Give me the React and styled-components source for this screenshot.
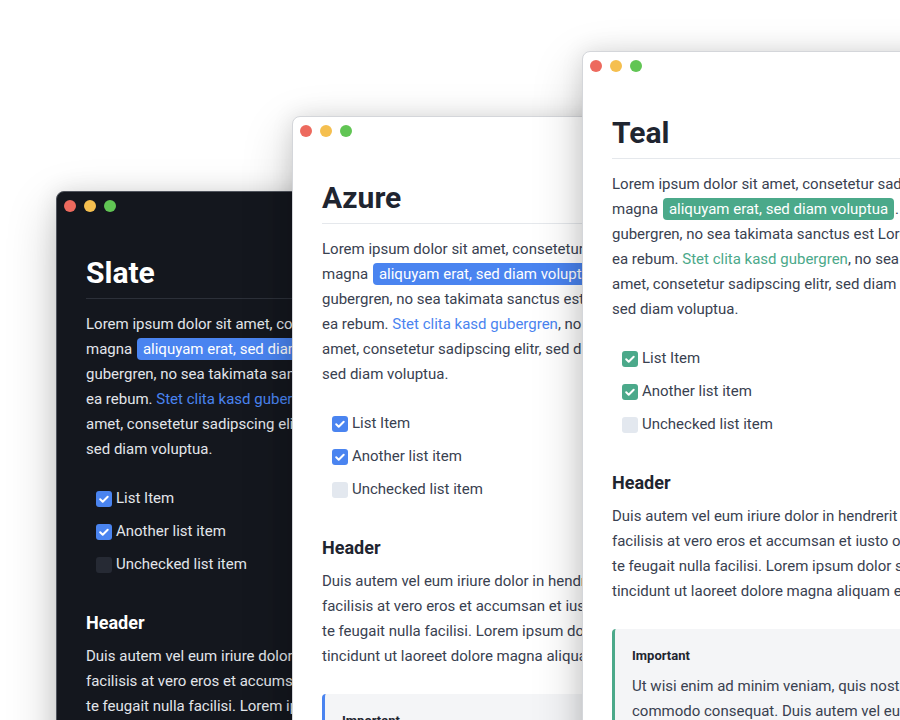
import styled, { createGlobalStyle, ThemeProvider } from "styled-components";

const GlobalStyle = createGlobalStyle`
  html, body {
    margin: 0;
    padding: 0;
    background: #ffffff;
  }
  body {
    font-family: Roboto, "Liberation Sans", sans-serif;
    -webkit-font-smoothing: antialiased;
  }
`;

const slate = {
  bg: "#14171e",
  frame: "#50545d",
  title: "#ffffff",
  text: "#e2e5ea",
  rule: "#2c3039",
  accent: "#4a84f0",
  unchecked: "#262a34",
  callout: "#1d2129",
};

const azure = {
  bg: "#ffffff",
  frame: "#d4d6da",
  title: "#1f2530",
  text: "#394150",
  rule: "#e5e8ec",
  accent: "#4a84f0",
  unchecked: "#e3e8ef",
  callout: "#f4f5f7",
};

const teal = { ...azure, accent: "#4ba98a" };

const windows = [
  { name: "Slate", theme: slate, left: 56, top: 191 },
  { name: "Azure", theme: azure, left: 292, top: 116 },
  { name: "Teal", theme: teal, left: 582, top: 51 },
];

const checks = [
  { label: "List Item", done: true },
  { label: "Another list item", done: true },
  { label: "Unchecked list item", done: false },
];

export default function App() {
  return (
    <>
      <GlobalStyle />
      <Desktop>
        {windows.map((w) => (
          <ThemeProvider theme={w.theme} key={w.name}>
            <Window style={{ left: w.left, top: w.top }}>
              <TitleBar>
                <Dot color="#ed6a5e" />
                <Dot color="#f5bf4f" />
                <Dot color="#61c554" />
              </TitleBar>
              <Content>
                <Title>{w.name}</Title>
                <Para>
                  Lorem ipsum dolor sit amet, consetetur sadipscing elitr, sed diam nonumy eirmod tempor invidunt ut labore et dolore
                  <br />
                  magna <Mark>aliquyam erat, sed diam voluptua</Mark>. At vero eos et accusam et justo duo dolores et ea rebum. Stet clita kasd
                  <br />
                  gubergren, no sea takimata sanctus est Lorem ipsum dolor sit amet. Lorem ipsum dolor sit amet, consetetur sadipscing
                  <br />
                  ea rebum. <Link>Stet clita kasd gubergren</Link>, no sea takimata sanctus est Lorem ipsum dolor sit amet. Lorem ipsum
                  <br />
                  amet, consetetur sadipscing elitr, sed diam nonumy eirmod tempor invidunt ut labore et dolore magna aliquyam erat,
                  <br />
                  sed diam voluptua.
                </Para>
                <CheckList>
                  {checks.map((c) => (
                    <CheckItem key={c.label}>
                      <Box done={c.done}>
                        {c.done && (
                          <svg width="16" height="16" viewBox="0 0 16 16">
                            <path
                              d="M4.2 8.3l2.5 2.4 5-5"
                              fill="none"
                              stroke="#fff"
                              strokeWidth="2"
                              strokeLinecap="round"
                              strokeLinejoin="round"
                            />
                          </svg>
                        )}
                      </Box>
                      {c.label}
                    </CheckItem>
                  ))}
                </CheckList>
                <Header>Header</Header>
                <Para>
                  Duis autem vel eum iriure dolor in hendrerit in vulputate velit esse molestie consequat, vel illum dolore eu feugiat
                  <br />
                  facilisis at vero eros et accumsan et iusto odio dignissim qui blandit praesent luptatum zzril delenit augue duis
                  <br />
                  te feugait nulla facilisi. Lorem ipsum dolor sit amet, consectetuer adipiscing elit, sed diam nonummy nibh euismod
                  <br />
                  tincidunt ut laoreet dolore magna aliquam erat volutpat.
                </Para>
                <Callout>
                  <CalloutTitle>Important</CalloutTitle>
                  <Para>
                    Ut wisi enim ad minim veniam, quis nostrud exerci tation ullamcorper suscipit lobortis nisl ut aliquip ex ea
                    <br />
                    commodo consequat. Duis autem vel eum iriure dolor in hendrerit in vulputate velit esse molestie consequat.
                  </Para>
                </Callout>
              </Content>
            </Window>
          </ThemeProvider>
        ))}
      </Desktop>
    </>
  );
}

const Desktop = styled.div`
  position: relative;
  width: 900px;
  height: 720px;
  overflow: hidden;
  background: #ffffff;
`;

const Window = styled.div`
  position: absolute;
  width: 780px;
  height: 820px;
  box-sizing: border-box;
  background: ${(p) => p.theme.bg};
  border: 1px solid ${(p) => p.theme.frame};
  border-radius: 8px 8px 0 0;
  overflow: hidden;
  box-shadow: 0 18px 50px rgba(0, 0, 0, 0.22), 0 0 22px rgba(0, 0, 0, 0.1);
`;

const TitleBar = styled.div`
  display: flex;
  align-items: center;
  gap: 8px;
  height: 28px;
  padding-left: 7px;
`;

const Dot = styled.span`
  width: 12px;
  height: 12px;
  border-radius: 50%;
  background: ${(p) => p.color};
`;

const Content = styled.div`
  padding: 36px 29px 0;
`;

const Title = styled.h1`
  margin: 0;
  font-size: 30px;
  line-height: 34px;
  font-weight: 700;
  color: ${(p) => p.theme.title};
  padding-bottom: 8px;
  border-bottom: 1px solid ${(p) => p.theme.rule};
`;

const Para = styled.p`
  margin: 13px 0 0;
  font-size: 15px;
  line-height: 25px;
  white-space: nowrap;
  color: ${(p) => p.theme.text};
`;

const Mark = styled.span`
  background: ${(p) => p.theme.accent};
  color: #ffffff;
  border-radius: 4px;
  padding: 2px 6px;
  margin: 0 1px;
`;

const Link = styled.span`
  color: ${(p) => p.theme.accent};
`;

const CheckList = styled.ul`
  list-style: none;
  margin: 24px 0 0;
  padding: 0 0 0 10px;
  display: flex;
  flex-direction: column;
  gap: 8px;
`;

const CheckItem = styled.li`
  display: flex;
  align-items: center;
  gap: 4px;
  font-size: 15px;
  line-height: 25px;
  color: ${(p) => p.theme.text};
`;

const Box = styled.span`
  display: flex;
  width: 16px;
  height: 16px;
  border-radius: 3px;
  background: ${(p) => (p.done ? p.theme.accent : p.theme.unchecked)};
`;

const Header = styled.h2`
  margin: 34px 0 0;
  font-size: 18px;
  line-height: 24px;
  font-weight: 700;
  color: ${(p) => p.theme.title};

  & + p {
    margin-top: 9px;
  }
`;

const Callout = styled.div`
  margin-top: 25px;
  padding: 18px 20px 16px 17px;
  background: ${(p) => p.theme.callout};
  border-left: 3px solid ${(p) => p.theme.accent};
  border-radius: 4px;

  p {
    margin-top: 9px;
  }
`;

const CalloutTitle = styled.div`
  font-size: 13px;
  line-height: 18px;
  font-weight: 700;
  color: ${(p) => p.theme.title};
`;
